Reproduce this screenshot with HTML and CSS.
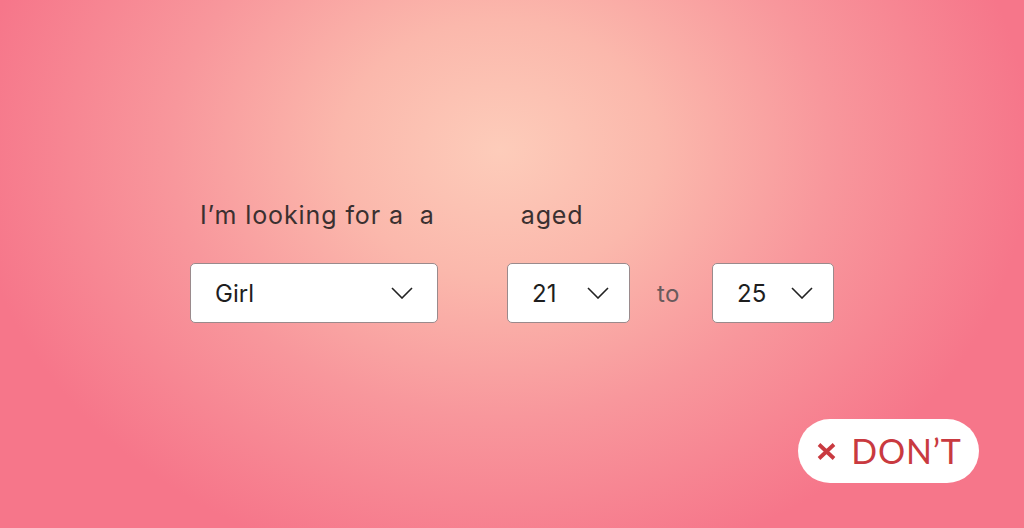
FILE: index.html
```html
<!DOCTYPE html>
<html>
<head>
<meta charset="utf-8">
<link rel="stylesheet" href="styles.css">
</head>
<body>
<div class="stage">
  <div class="labels">
    <span class="lbl-first">I’m looking for a&nbsp; a</span>
    <span class="lbl-aged">aged</span>
  </div>
  <div class="controls">
    <div class="select select-wide">
      <span class="val">Girl</span>
      <svg class="chev" width="22" height="12" viewBox="0 0 22 12"><path d="M1 1 L11 11 L21 1" fill="none" stroke="#222" stroke-width="1.6"/></svg>
    </div>
    <div class="select select-num first-num">
      <span class="val">21</span>
      <svg class="chev" width="22" height="12" viewBox="0 0 22 12"><path d="M1 1 L11 11 L21 1" fill="none" stroke="#222" stroke-width="1.6"/></svg>
    </div>
    <span class="to">to</span>
    <div class="select select-num">
      <span class="val">25</span>
      <svg class="chev" width="22" height="12" viewBox="0 0 22 12"><path d="M1 1 L11 11 L21 1" fill="none" stroke="#222" stroke-width="1.6"/></svg>
    </div>
  </div>
</div>
<div class="badge">
  <svg class="x" width="19" height="17" viewBox="0 0 19 17"><path d="M2 1.5 L17 15.5 M17 1.5 L2 15.5" stroke="#c93a40" stroke-width="3.8" stroke-linecap="butt"/></svg>
  <span class="badge-text">DON’T</span>
</div>
</body>
</html>
```
FILE: styles.css
```css
html, body {
  margin: 0;
  padding: 0;
}
body {
  width: 1024px;
  height: 528px;
  overflow: hidden;
  position: relative;
  font-family: "Inter", "Lato", sans-serif;
  background: radial-gradient(ellipse 530px 430px at 500px 150px, #fdccba 0%, #fbb8ac 30%, #f8979c 62%, #f6768a 100%);
}
.stage {
  padding: 198px 0 0 190px;
  display: flex;
  flex-direction: column;
}
.labels {
  display: flex;
  align-items: baseline;
  padding-left: 10px;
  height: 34px;
  font-size: 25px;
  line-height: 34px;
  color: #3a3030;
  letter-spacing: 0.9px;
}
.lbl-aged {
  margin-left: 86px;
}
.controls {
  display: flex;
  align-items: center;
  margin-top: 31px;
}
.select {
  box-sizing: border-box;
  height: 60px;
  background: #fff;
  border: 1px solid #9a8a8c;
  border-radius: 5px;
  display: flex;
  align-items: center;
  justify-content: space-between;
  font-size: 24px;
  color: #1e1e1e;
}
.select-wide {
  width: 248px;
  padding: 0 24px 0 24px;
}
.select-num {
  width: 122px;
  padding: 0 20px 0 24px;
}
.first-num {
  margin-left: 69px;
  width: 123px;
}
.chev {
  display: block;
}
.to {
  font-size: 24px;
  color: #6a5a5c;
  margin: 0 32px 0 27px;
  letter-spacing: 0.5px;
}
.badge {
  position: absolute;
  right: 45px;
  bottom: 45px;
  width: 181px;
  height: 64px;
  box-sizing: border-box;
  background: #fff;
  border-radius: 32px;
  display: flex;
  align-items: center;
  justify-content: center;
  gap: 15px;
  color: #c93a40;
  padding-left: 2px;
}
.badge .x {
  display: block;
}
.badge-text {
  font-family: "Lato", sans-serif;
  font-size: 34px;
  line-height: 1;
  letter-spacing: 0.8px;
}
```
